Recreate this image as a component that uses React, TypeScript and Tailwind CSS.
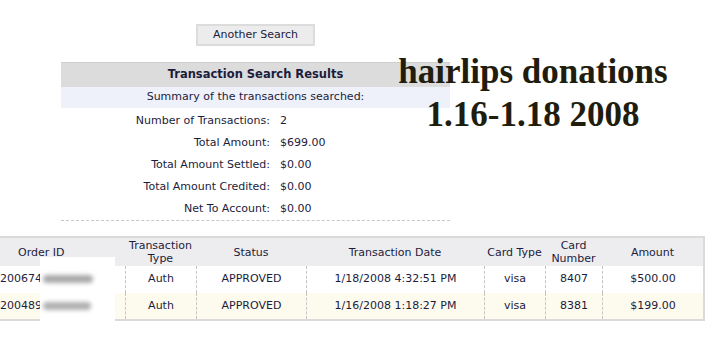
import React from "react";

const summary = [
  ["Number of Transactions:", "2"],
  ["Total Amount:", "$699.00"],
  ["Total Amount Settled:", "$0.00"],
  ["Total Amount Credited:", "$0.00"],
  ["Net To Account:", "$0.00"],
];

const rows = [
  { id: "200674", type: "Auth", status: "APPROVED", date: "1/18/2008 4:32:51 PM", card: "visa", num: "8407", amount: "$500.00", bg: "bg-white" },
  { id: "200489", type: "Auth", status: "APPROVED", date: "1/16/2008 1:18:27 PM", card: "visa", num: "8381", amount: "$199.00", bg: "bg-[#fdfbee]" },
];

const cell = "border-l border-dashed border-[#c4c4c4] text-center";

export default function App() {
  return (
    <div className="relative h-[344px] w-[714px] overflow-hidden bg-white font-['DejaVu_Sans',sans-serif] text-[11px] text-[#1c1c3c]">
      <div className="ml-[61px] w-[389px] pt-[24px]">
        <div className="flex justify-center">
          <button className="h-[22px] w-[119px] border-2 border-[#dcdcdc] bg-[#ececec] text-[11px] text-[#1c1c3c]">
            Another Search
          </button>
        </div>

        <div className="mt-[16px] flex h-[25px] items-center justify-center border-t border-[#cfcfcf] bg-[#dcdcdc] font-bold text-[11.5px]">
          Transaction Search Results
        </div>
        <div className="flex h-[21px] items-center justify-center bg-[#eef1f9]">
          Summary of the transactions searched:
        </div>
        <div className="border-b border-dashed border-[#c8c8c8] pt-[2px]">
          {summary.map(([label, value]) => (
            <div key={label} className="flex h-[22px] items-center">
              <span className="w-[209px] text-right">{label}</span>
              <span className="ml-[10px]">{value}</span>
            </div>
          ))}
        </div>
      </div>

      <div className="mt-[15px] w-[705px] border-y-2 border-r-2 border-[#dadada]">
        <div className="flex h-[28px] items-center bg-[#ededef] leading-[13px]">
          <div className="w-[125px] pl-[18px]">Order ID</div>
          <div className="w-[71px] text-center">Transaction<br />Type</div>
          <div className="w-[110px] text-center">Status</div>
          <div className="w-[178px] text-center">Transaction Date</div>
          <div className="w-[61px] text-center">Card Type</div>
          <div className="w-[57px] text-center">Card<br />Number</div>
          <div className="flex-1 text-center">Amount</div>
        </div>
        {rows.map((r) => (
          <div key={r.id} className={`flex h-[26.5px] items-stretch ${r.bg}`}>
            <div className="flex w-[125px] items-center">{r.id}</div>
            <div className={`flex w-[71px] items-center justify-center ${cell}`}>{r.type}</div>
            <div className={`flex w-[110px] items-center justify-center ${cell}`}>{r.status}</div>
            <div className={`flex w-[178px] items-center justify-center ${cell}`}>{r.date}</div>
            <div className={`flex w-[61px] items-center justify-center ${cell}`}>{r.card}</div>
            <div className={`flex w-[57px] items-center justify-center ${cell}`}>{r.num}</div>
            <div className={`flex flex-1 items-center justify-center ${cell}`}>{r.amount}</div>
          </div>
        ))}
      </div>

      {/* blurred-out order ids */}
      <div className="absolute left-[40px] top-[257px] h-[68px] w-[75px] bg-white">
        <div className="ml-[3px] mt-[18px] h-[8px] w-[50px] rounded bg-[#a9a9a9] blur-[2px]" />
        <div className="ml-[3px] mt-[19px] h-[8px] w-[48px] rounded bg-[#b0b0b0] blur-[2px]" />
      </div>

      <div className="absolute left-[398px] top-[50px] w-[270px] whitespace-nowrap text-center font-['Liberation_Serif',serif] text-[35px] font-bold leading-[43px] text-[#211d0e]">
        hairlips donations
        <br />
        1.16-1.18 2008
      </div>
    </div>
  );
}
